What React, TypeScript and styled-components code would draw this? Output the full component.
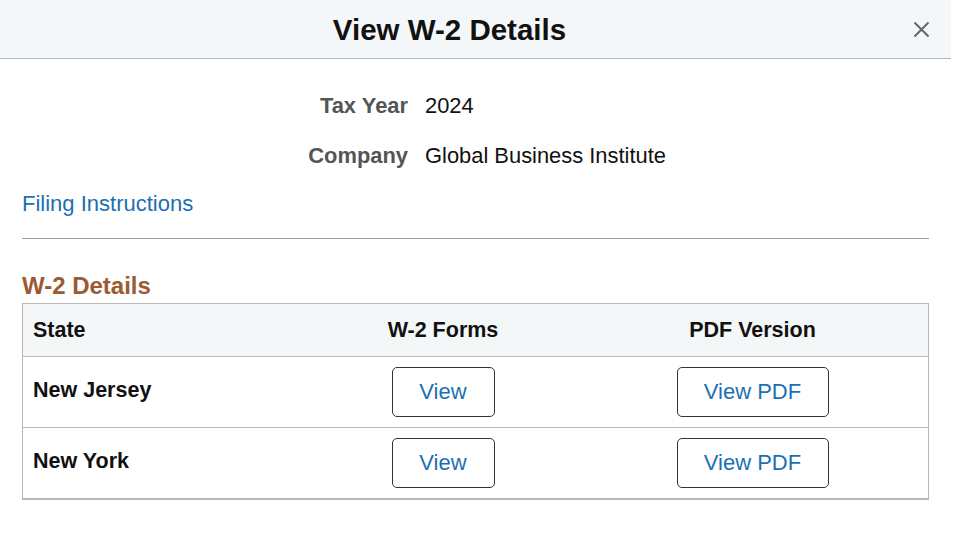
import * as React from 'react';
import styled, { createGlobalStyle } from 'styled-components';

const GlobalStyle = createGlobalStyle`
    body {
        margin: 0;
        background: #ffffff;
        font-family: "Liberation Sans", Arial, sans-serif;
        color: #1a1a1a;
    }
`;

const Dialog = styled.div`
    width: 951px;
    height: 536px;
    background: #ffffff;
`;

const Header = styled.div`
    position: relative;
    height: 58px;
    padding-right: 52px;
    background: #f4f7f9;
    border-bottom: 1px solid #b9b5ae;
    display: flex;
    align-items: center;
    justify-content: center;
`;

const Title = styled.h1`
    margin: 0;
    font-size: 29.5px;
    font-weight: bold;
    color: #111111;
    padding-top: 1px;
`;

const CloseButton = styled.button`
    position: absolute;
    right: 21px;
    top: 20px;
    width: 18px;
    height: 18px;
    padding: 0;
    border: none;
    background: transparent;
    display: flex;
    align-items: center;
    justify-content: center;
    cursor: pointer;
`;

const Body = styled.div`
    padding: 28px 22px 0 22px;
`;

const InfoGrid = styled.div`
    display: grid;
    grid-template-columns: 386px 1fr;
    column-gap: 17px;
    row-gap: 14px;
`;

const Label = styled.div`
    height: 36px;
    line-height: 37px;
    text-align: right;
    font-size: 21.9px;
    font-weight: bold;
    color: #555555;
`;

const Value = styled.div`
    height: 36px;
    line-height: 37px;
    font-size: 21.9px;
    color: #111111;
`;

const Link = styled.a`
    display: inline-block;
    margin-top: 17px;
    line-height: 27px;
    font-size: 22px;
    color: #1c6fb3;
    text-decoration: none;
    cursor: pointer;
`;

const Divider = styled.hr`
    margin: 21px 0 0 0;
    border: none;
    border-top: 1px solid #9d9d9d;
`;

const SectionTitle = styled.h2`
    margin: 33px 0 3px 0;
    line-height: 28px;
    font-size: 24px;
    font-weight: bold;
    color: #9b5a31;
`;

const Table = styled.div`
    border: 1px solid #bcb8b1;
    border-bottom-width: 2px;
`;

const Row = styled.div<{ $head?: boolean }>`
    display: grid;
    grid-template-columns: 286px 268px 1fr;
    height: ${p => (p.$head ? 52 : 70)}px;
    background: ${p => (p.$head ? '#f4f7f8' : '#ffffff')};
    & + & {
        border-top: 1px solid #bcb8b1;
    }
`;

const Cell = styled.div<{ $center?: boolean }>`
    display: flex;
    align-items: center;
    justify-content: ${p => (p.$center ? 'center' : 'flex-start')};
    padding-left: ${p => (p.$center ? 0 : 10)}px;
    font-size: 21.5px;
    font-weight: bold;
    color: #111111;
`;

const RowLabel = styled.span`
    margin-top: -4px;
`;

const ActionButton = styled.button<{ $width: number }>`
    width: ${p => p.$width}px;
    height: 50px;
    border: 1px solid #333333;
    border-radius: 5px;
    background: #ffffff;
    font-family: "Liberation Sans", Arial, sans-serif;
    font-size: 22px;
    color: #1c6fb3;
    cursor: pointer;
    padding: 0;
`;

type StateRow = {
    state: string
};

const rows: StateRow[] = [
    { state: 'New Jersey' },
    { state: 'New York' },
];

const App = () => {
    return (
        <Dialog>
            <GlobalStyle />
            <Header>
                <Title>View W-2 Details</Title>
                <CloseButton aria-label="Close">
                    <svg width="17" height="17" viewBox="0 0 17 17">
                        <path d="M1.5 1.5 L15.5 15.5 M15.5 1.5 L1.5 15.5" stroke="#666666" strokeWidth="2" />
                    </svg>
                </CloseButton>
            </Header>
            <Body>
                <InfoGrid>
                    <Label>Tax Year</Label>
                    <Value>2024</Value>
                    <Label>Company</Label>
                    <Value>Global Business Institute</Value>
                </InfoGrid>
                <Link>Filing Instructions</Link>
                <Divider />
                <SectionTitle>W-2 Details</SectionTitle>
                <Table>
                    <Row $head>
                        <Cell>State</Cell>
                        <Cell $center>W-2 Forms</Cell>
                        <Cell $center>PDF Version</Cell>
                    </Row>
                    {rows.map(row => (
                        <Row key={row.state}>
                            <Cell><RowLabel>{row.state}</RowLabel></Cell>
                            <Cell $center><ActionButton $width={103}>View</ActionButton></Cell>
                            <Cell $center><ActionButton $width={152}>View PDF</ActionButton></Cell>
                        </Row>
                    ))}
                </Table>
            </Body>
        </Dialog>
    );
};

export default App;
